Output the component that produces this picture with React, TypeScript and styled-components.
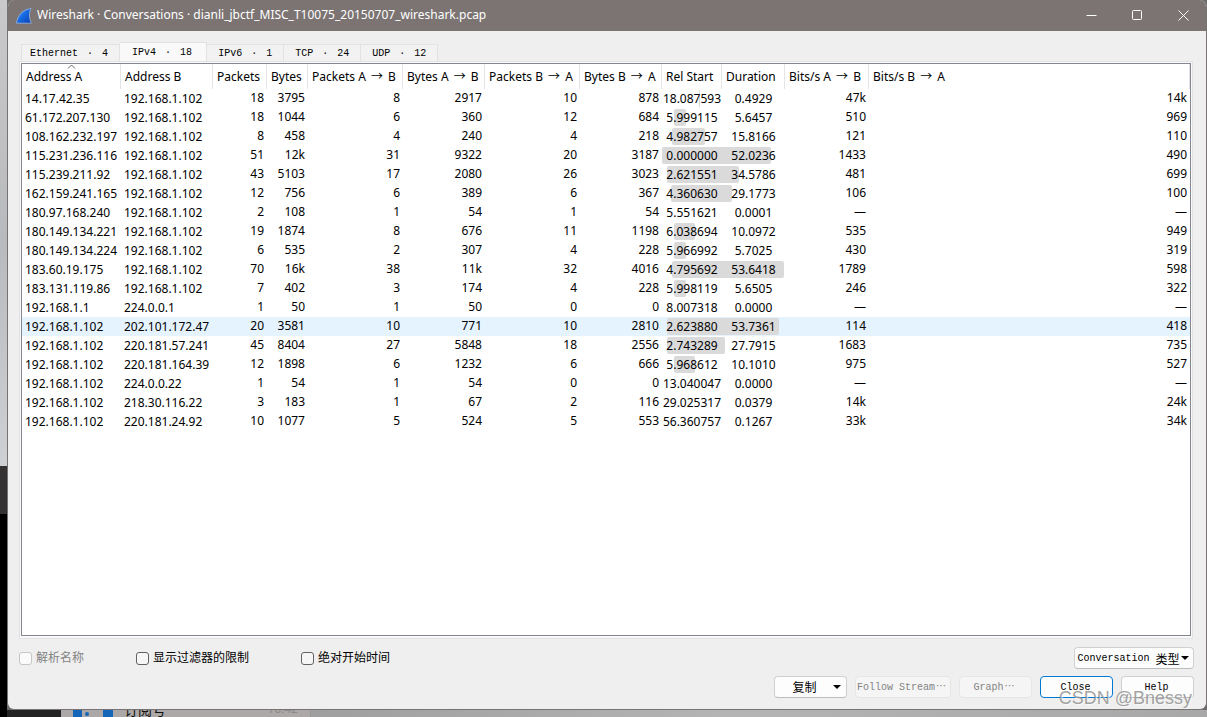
import React from "react";
import styled, { createGlobalStyle, css } from "styled-components";

const UI_FONT = `"Noto Sans", "Noto Sans CJK SC", sans-serif`;
const MONO_FONT = `"Liberation Mono", "Noto Sans CJK SC", monospace`;

const GlobalStyle = createGlobalStyle`
  *, *::before, *::after { box-sizing: border-box; }
  body { margin: 0; background: #000; }
`;

const Desktop = styled.div`
  position: relative;
  display: grid;
  grid-template-columns: 7px minmax(0, 1fr);
  grid-template-rows: minmax(0, 1fr) 7px;
  height: 100vh;
  min-width: 960px;
  overflow: hidden;
  font-family: ${UI_FONT};
  font-size: 12px;
  color: #000;
`;

const LeftEdge = styled.div`
  grid-row: 1 / 3;
  background: linear-gradient(
    #c9c9cb 0,
    #b9babd 240px,
    #cfd0d3 466px,
    #343233 466px,
    #343233 514px,
    #000 514px
  );
`;

const Behind = styled.div`
  background: #6d6b6b;
  overflow: hidden;
`;

const BottomEdge = styled.div`
  display: flex;
  overflow: hidden;
  background: linear-gradient(90deg, #8f8f8f, #b4b4b4 60%, #a8a8a8);
`;

const DarkBlock = styled.div`
  width: 54px;
  background: #232323;
`;

const ChatItem = styled.div`
  display: flex;
  width: 250px;
  padding-left: 12px;
  background: #aca8a7;
  border-right: 1px solid #999;
`;

const ChatIcon = styled.svg`
  flex: none;
  width: 40px;
  height: 7px;
`;

const ChatName = styled.span`
  margin: -9px auto 0 11px;
  font-size: 14px;
  line-height: 18px;
  color: #111;
`;

const ChatTime = styled.span`
  margin: -9px 12px 0 0;
  font-size: 12px;
  line-height: 16px;
  color: #8b8b8b;
`;

const Window = styled.main`
  display: flex;
  flex-direction: column;
  height: 100%;
  border: 1px solid #777372;
  border-top: 0;
  border-radius: 7px;
  background: #efefef;
  overflow: hidden;
`;

const TitleBar = styled.header`
  display: flex;
  flex: none;
  align-items: center;
  height: 31px;
  padding-left: 8px;
  background: #7b7473;
  color: #fff;
`;

const Title = styled.h1`
  flex: 1;
  margin: 0 0 0 5px;
  padding-bottom: 2px;
  font-size: 12px;
  font-weight: 400;
  line-height: 20px;
`;

const CaptionButton = styled.button`
  display: flex;
  align-items: center;
  justify-content: center;
  width: 46px;
  height: 31px;
  padding: 0;
  border: 0;
  background: transparent;
  color: #fff;
`;

const Content = styled.div`
  display: flex;
  flex: 1;
  flex-direction: column;
  min-height: 0;
  padding: 11px 12px 11px 11px;
`;

const TabBar = styled.div`
  display: flex;
  flex: none;
  align-items: flex-end;
  height: 19px;
  margin-left: 2px;
`;

const Tab = styled.button<{ $active?: boolean }>`
  height: 17px;
  padding: 1px 11px 0;
  border: 1px solid #e2e2e2;
  border-left-width: 0;
  border-bottom: 0;
  background: #f2f2f2;
  color: #000;
  font-family: ${MONO_FONT};
  font-size: 10px;
  line-height: 15px;
  white-space: pre;

  &:first-child {
    padding: 1px 11px 0 8px;
    border-left-width: 1px;
  }

  ${(p) =>
    p.$active &&
    css`
      height: 19px;
      padding: 0 14px 0 12px;
      background: #f9f9f9;
    `}
`;

const WideGlyph = styled.span`
  display: inline-block;
  width: 12px;
  text-align: center;
`;

const Pane = styled.section`
  display: flex;
  flex: 1;
  min-height: 0;
  margin-right: 1px;
  padding: 1px 1px 2px;
  border: 1px solid #e2e2e2;
  background: #f9f9f9;
`;

const TableFrame = styled.div`
  flex: 1;
  border: 1px solid #828790;
  background: #fff;
  overflow: hidden;
`;

const Table = styled.table`
  width: 100%;
  table-layout: fixed;
  border-collapse: separate;
  border-spacing: 0;
`;

const Col = styled.col<{ $width?: number }>`
  width: ${(p) => (p.$width ? `${p.$width}px` : "auto")};
`;

const HeadCell = styled.th`
  position: relative;
  height: 25px;
  padding: 0 0 0 4px;
  border-right: 1px solid #e5e5e5;
  font-weight: 400;
  line-height: 24px;
  text-align: left;
  white-space: nowrap;
`;

const Direction = styled.span`
  display: inline-block;
  width: 16px;
  text-align: center;
`;

const SortMark = styled.svg`
  position: absolute;
  top: 0;
  left: 45px;
  width: 9px;
  height: 5px;
`;

const Row = styled.tr<{ $hot?: boolean }>`
  background: ${(p) => (p.$hot ? "#e5f3ff" : "transparent")};
`;

const Cell = styled.td<{ $align?: "left" | "right" | "center" }>`
  position: relative;
  height: 19px;
  padding: ${(p) => (p.$align === "center" ? "0" : "0 3px")};
  line-height: ${(p) => (p.$align === "right" ? "17px" : "19px")};
  text-align: ${(p) => p.$align ?? "left"};
  vertical-align: top;
  white-space: nowrap;
`;

const CellText = styled.span`
  position: relative;
  z-index: 1;
`;

const SpanBar = styled.span`
  position: absolute;
  top: 1px;
  height: 17px;
  border-radius: 2px;
  background: #dadada;
`;

const Options = styled.div`
  display: flex;
  flex: none;
  align-items: center;
  gap: 52px;
  margin-top: 8px;
`;

const CheckLabel = styled.label<{ $disabled?: boolean }>`
  display: flex;
  align-items: center;
  gap: 4px;
  font-family: "Noto Sans CJK SC", sans-serif;
  line-height: 20px;
  color: ${(p) => (p.$disabled ? "#838383" : "#000")};
`;

const CheckText = styled.span`
  padding-bottom: 2px;
`;

const Check = styled.input`
  appearance: none;
  width: 13px;
  height: 13px;
  margin: 0;
  border: 1px solid #626262;
  border-radius: 3px;
  background: #f6f6f6;

  &:disabled {
    border-color: #c6c6c6;
    background: #fafafa;
  }
`;

const PushButton = styled.button<{ $width: number; $primary?: boolean }>`
  display: flex;
  align-items: center;
  justify-content: center;
  width: ${(p) => p.$width}px;
  height: 22px;
  padding: 2px 2px 0 0;
  border: 1px solid ${(p) => (p.$primary ? "#0078d4" : "#d0d0d0")};
  border-bottom-color: ${(p) => (p.$primary ? "#0078d4" : "#bcbcbc")};
  border-radius: 4px;
  background: #fdfdfd;
  color: #000;
  font-family: ${MONO_FONT};
  font-size: 10px;
  line-height: 18px;
  white-space: pre;

  &:disabled {
    border-color: #e6e6e6;
    background: #f5f5f5;
    color: #838383;
  }
`;

const Han = styled.span`
  font-family: "Noto Sans CJK SC", sans-serif;
  font-size: 12px;
`;

const Spread = styled.span`
  flex: 1;
  padding-left: 2px;
  text-align: center;
`;

const Arrow = styled.svg<{ $gap?: number }>`
  width: 8px;
  height: 4px;
  margin: 0 ${(p) => p.$gap ?? 0}px 2px 1px;
`;

const TypeMenu = styled(PushButton)`
  margin-left: auto;
`;

const Actions = styled.footer`
  display: flex;
  flex: none;
  justify-content: flex-end;
  gap: 8px;
  margin-top: 7px;
`;

const Watermark = styled.div`
  position: absolute;
  right: 15px;
  bottom: 7px;
  font-family: "Liberation Sans", sans-serif;
  font-size: 18px;
  line-height: 24px;
  color: rgba(140, 140, 140, 0.8);
  text-shadow: 1px 1px 0 rgba(255, 255, 255, 0.6);
  pointer-events: none;
`;

const TABS: [string, number][] = [
  ["Ethernet", 4],
  ["IPv4", 18],
  ["IPv6", 1],
  ["TCP", 24],
  ["UDP", 12],
];

const COLUMNS: [string, number?][] = [
  ["Address A", 99],
  ["Address B", 92],
  ["Packets", 54],
  ["Bytes", 41],
  ["Packets A → B", 95],
  ["Bytes A → B", 82],
  ["Packets B → A", 95],
  ["Bytes B → A", 82],
  ["Rel Start", 60],
  ["Duration", 63],
  ["Bits/s A → B", 84],
  ["Bits/s B → A"],
];

const CONVERSATIONS: string[][] = [
  ["14.17.42.35", "192.168.1.102", "18", "3795", "8", "2917", "10", "878", "18.087593", "0.4929", "47k", "14k"],
  ["61.172.207.130", "192.168.1.102", "18", "1044", "6", "360", "12", "684", "5.999115", "5.6457", "510", "969"],
  ["108.162.232.197", "192.168.1.102", "8", "458", "4", "240", "4", "218", "4.982757", "15.8166", "121", "110"],
  ["115.231.236.116", "192.168.1.102", "51", "12k", "31", "9322", "20", "3187", "0.000000", "52.0236", "1433", "490"],
  ["115.239.211.92", "192.168.1.102", "43", "5103", "17", "2080", "26", "3023", "2.621551", "34.5786", "481", "699"],
  ["162.159.241.165", "192.168.1.102", "12", "756", "6", "389", "6", "367", "4.360630", "29.1773", "106", "100"],
  ["180.97.168.240", "192.168.1.102", "2", "108", "1", "54", "1", "54", "5.551621", "0.0001", "—", "—"],
  ["180.149.134.221", "192.168.1.102", "19", "1874", "8", "676", "11", "1198", "6.038694", "10.0972", "535", "949"],
  ["180.149.134.224", "192.168.1.102", "6", "535", "2", "307", "4", "228", "5.966992", "5.7025", "430", "319"],
  ["183.60.19.175", "192.168.1.102", "70", "16k", "38", "11k", "32", "4016", "4.795692", "53.6418", "1789", "598"],
  ["183.131.119.86", "192.168.1.102", "7", "402", "3", "174", "4", "228", "5.998119", "5.6505", "246", "322"],
  ["192.168.1.1", "224.0.0.1", "1", "50", "1", "50", "0", "0", "8.007318", "0.0000", "—", "—"],
  ["192.168.1.102", "202.101.172.47", "20", "3581", "10", "771", "10", "2810", "2.623880", "53.7361", "114", "418"],
  ["192.168.1.102", "220.181.57.241", "45", "8404", "27", "5848", "18", "2556", "2.743289", "27.7915", "1683", "735"],
  ["192.168.1.102", "220.181.164.39", "12", "1898", "6", "1232", "6", "666", "5.968612", "10.1010", "975", "527"],
  ["192.168.1.102", "224.0.0.22", "1", "54", "1", "54", "0", "0", "13.040047", "0.0000", "—", "—"],
  ["192.168.1.102", "218.30.116.22", "3", "183", "1", "67", "2", "116", "29.025317", "0.0379", "14k", "24k"],
  ["192.168.1.102", "220.181.24.92", "10", "1077", "5", "524", "5", "553", "56.360757", "0.1267", "33k", "34k"],
];

const HOT_ROW = 12;
const START_COL = 8;
const DURATION_COL = 9;
const PX_PER_SECOND = 2.09;

function TimeBar({ start, duration }: { start: number; duration: number }) {
  const width = Math.round(duration * PX_PER_SECOND);
  if (width < 1) return null;
  return <SpanBar style={{ left: Math.floor(start * PX_PER_SECOND), width }} />;
}

function alignOf(col: number): "left" | "right" | "center" {
  if (col < 2) return "left";
  return col === START_COL || col === DURATION_COL ? "center" : "right";
}

function HeadText({ name }: { name: string }) {
  const [before, after] = name.split("→");
  if (after === undefined) return <>{name}</>;
  return (
    <>
      {before}
      <Direction>→</Direction>
      {after}
    </>
  );
}

function FinLogo() {
  return (
    <svg width="16" height="16" viewBox="0 0 16 16" aria-hidden="true">
      <defs>
        <linearGradient id="fin" x1="0" y1="0" x2="1" y2="1">
          <stop offset="0" stopColor="#4f9bff" />
          <stop offset="0.5" stopColor="#1467e0" />
          <stop offset="1" stopColor="#0a3fae" />
        </linearGradient>
      </defs>
      <path
        d="M0.5 15.2C1.6 7.6 6.4 1.4 15.2 0.6C13 3.8 12.6 9.6 15.4 15.2Z"
        fill="url(#fin)"
        stroke="#9db9de"
        strokeWidth="0.8"
      />
    </svg>
  );
}

function DropArrow({ gap }: { gap?: number }) {
  return (
    <Arrow $gap={gap} viewBox="0 0 8 4" aria-hidden="true">
      <path d="M0 0H8L4 4Z" fill="#000" />
    </Arrow>
  );
}

export default function App() {
  return (
    <>
      <GlobalStyle />
      <Desktop>
        <LeftEdge />
        <Behind>
          <Window>
            <TitleBar>
              <FinLogo />
              <Title>Wireshark · Conversations · dianli_jbctf_MISC_T10075_20150707_wireshark.pcap</Title>
              <CaptionButton aria-label="Minimize">
                <svg width="11" height="11" viewBox="0 0 11 11">
                  <path d="M0.5 5.5H10.5" stroke="currentColor" />
                </svg>
              </CaptionButton>
              <CaptionButton aria-label="Maximize">
                <svg width="11" height="11" viewBox="0 0 11 11">
                  <rect x="0.5" y="0.5" width="9" height="9" rx="1" fill="none" stroke="currentColor" />
                </svg>
              </CaptionButton>
              <CaptionButton aria-label="Close window">
                <svg width="11" height="11" viewBox="0 0 11 11">
                  <path d="M0.5 0.5L10.5 10.5M10.5 0.5L0.5 10.5" stroke="currentColor" />
                </svg>
              </CaptionButton>
            </TitleBar>

            <Content>
              <TabBar role="tablist">
                {TABS.map(([name, count]) => (
                  <Tab key={name} role="tab" aria-selected={name === "IPv4"} $active={name === "IPv4"}>
                    {name} <WideGlyph>·</WideGlyph> {count}
                  </Tab>
                ))}
              </TabBar>

              <Pane>
                <TableFrame>
                  <Table>
                    <colgroup>
                      {COLUMNS.map(([name, width]) => (
                        <Col key={name} $width={width} />
                      ))}
                    </colgroup>
                    <thead>
                      <tr>
                        {COLUMNS.map(([name], i) => (
                          <HeadCell key={name} scope="col">
                            <HeadText name={name} />
                            {i === 0 && (
                              <SortMark viewBox="0 0 9 5" aria-hidden="true">
                                <path d="M1 4.5L4.5 1L8 4.5" fill="none" stroke="#666" />
                              </SortMark>
                            )}
                          </HeadCell>
                        ))}
                      </tr>
                    </thead>
                    <tbody>
                      {CONVERSATIONS.map((row, r) => (
                        <Row key={r} $hot={r === HOT_ROW}>
                          {row.map((value, c) => (
                            <Cell key={c} $align={alignOf(c)}>
                              {c === START_COL && (
                                <TimeBar start={Number(value)} duration={Number(row[DURATION_COL])} />
                              )}
                              <CellText>{value}</CellText>
                            </Cell>
                          ))}
                        </Row>
                      ))}
                    </tbody>
                  </Table>
                </TableFrame>
              </Pane>

              <Options>
                <CheckLabel $disabled>
                  <Check type="checkbox" disabled />
                  <CheckText>解析名称</CheckText>
                </CheckLabel>
                <CheckLabel>
                  <Check type="checkbox" />
                  <CheckText>显示过滤器的限制</CheckText>
                </CheckLabel>
                <CheckLabel>
                  <Check type="checkbox" />
                  <CheckText>绝对开始时间</CheckText>
                </CheckLabel>
                <TypeMenu $width={120} aria-haspopup="menu">
                  Conversation <Han>类型</Han>
                  <DropArrow />
                </TypeMenu>
              </Options>

              <Actions>
                <PushButton $width={73} aria-haspopup="menu">
                  <Spread>
                    <Han>复制</Han>
                  </Spread>
                  <DropArrow gap={3} />
                </PushButton>
                <PushButton $width={96} disabled>
                  Follow Stream<WideGlyph>⋯</WideGlyph>
                </PushButton>
                <PushButton $width={73} disabled>
                  Graph<WideGlyph>⋯</WideGlyph>
                </PushButton>
                <PushButton $width={73} $primary>
                  Close
                </PushButton>
                <PushButton $width={73}>Help</PushButton>
              </Actions>
            </Content>
          </Window>
        </Behind>
        <BottomEdge>
          <DarkBlock />
          <ChatItem>
            <ChatIcon viewBox="0 0 40 7" aria-hidden="true">
              <path d="M0 0H9V7H0ZM30 0H40V7H30Z" fill="#1565b8" />
              <circle cx="14" cy="4" r="2" fill="#1565b8" />
            </ChatIcon>
            <ChatName>订阅号</ChatName>
            <ChatTime>16:42</ChatTime>
          </ChatItem>
        </BottomEdge>
        <Watermark>CSDN @Bnessy</Watermark>
      </Desktop>
    </>
  );
}
